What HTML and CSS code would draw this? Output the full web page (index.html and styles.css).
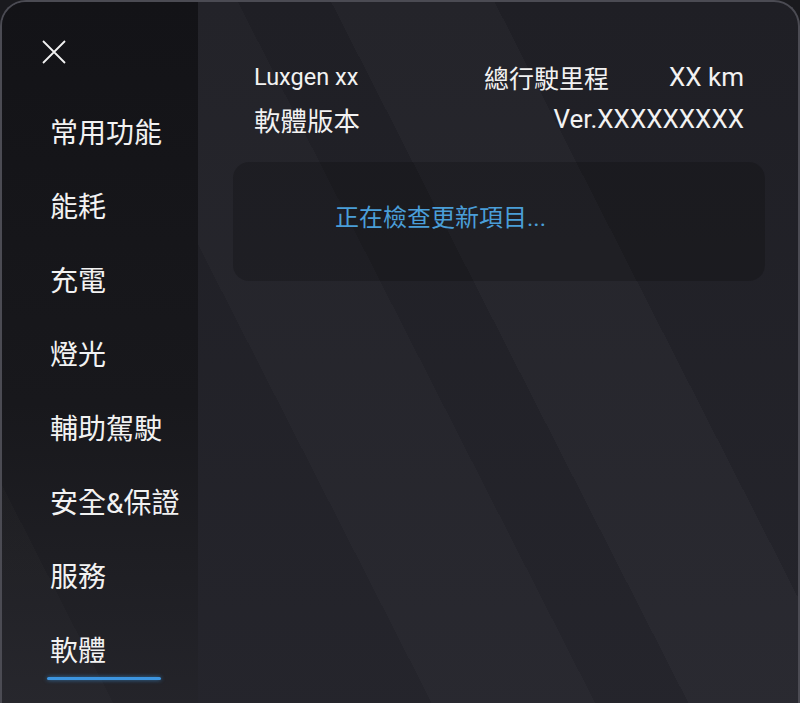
FILE: index.html
```html
<!DOCTYPE html>
<html lang="zh-Hant">
<head>
    <meta charset="UTF-8">
    <meta name="viewport" content="width=device-width, initial-scale=1.0">
    <title>Luxgen - 軟體</title>
    <link rel="stylesheet" href="styles.css">
</head>
<body>
    <div class="panel">
        <aside class="sidebar">
            <button class="close-btn" aria-label="關閉">
                <svg width="24" height="24" viewBox="0 0 24 24">
                    <path d="M1 1 L23 23 M23 1 L1 23" stroke="#f2f2f2" stroke-width="1.8" fill="none"/>
                </svg>
            </button>
            <ul class="nav">
                <li>常用功能</li>
                <li>能耗</li>
                <li>充電</li>
                <li>燈光</li>
                <li>輔助駕駛</li>
                <li>安全&amp;保證</li>
                <li>服務</li>
                <li class="active">軟體</li>
            </ul>
        </aside>

        <main class="content">
            <div class="info-row">
                <span class="model">Luxgen xx</span>
                <div class="info-right">
                    <span class="label mileage">總行駛里程</span>
                    <span class="value">XX km</span>
                </div>
            </div>
            <div class="info-row">
                <span class="label">軟體版本</span>
                <span class="value">Ver.XXXXXXXXX</span>
            </div>

            <div class="update-card">
                <p>正在檢查更新項目...</p>
            </div>
        </main>
    </div>
</body>
</html>
```

FILE: styles.css
```css
* {
    margin: 0;
    padding: 0;
    box-sizing: border-box;
}

body {
    width: 800px;
    height: 703px;
    overflow: hidden;
    background: #1a1a1e;
    font-family: 'Roboto', 'Noto Sans CJK TC', sans-serif;
    color: #f2f2f2;
}

.panel {
    display: flex;
    height: 730px;
    border: 2px solid #4b4b53;
    border-bottom: none;
    border-radius: 26px 26px 0 0;
    overflow: hidden;
    background:
        linear-gradient(63deg,
            transparent 0%, transparent 38%,
            rgba(255, 255, 255, 0.018) 38%, rgba(255, 255, 255, 0.018) 52%,
            transparent 52%, transparent 60%,
            rgba(255, 255, 255, 0.022) 60%, rgba(255, 255, 255, 0.022) 74%,
            transparent 74%),
        linear-gradient(180deg, #1f1f25 0%, #25252c 100%);
}

/* Sidebar */

.sidebar {
    width: 196px;
    flex-shrink: 0;
    padding-top: 38px;
    background:
        linear-gradient(63deg, rgba(255, 255, 255, 0.015) 0%, rgba(255, 255, 255, 0.015) 22%, transparent 22%),
        linear-gradient(180deg, #131317 0%, #18181c 55%, #25252b 100%);
}

.close-btn {
    display: block;
    margin-left: 40px;
    width: 24px;
    height: 24px;
    background: none;
    border: none;
    cursor: pointer;
}

.nav {
    list-style: none;
    margin-top: 33px;
}

.nav li {
    position: relative;
    height: 74px;
    line-height: 74px;
    padding-left: 48px;
    font-size: 28px;
}

.nav li.active::after {
    content: '';
    position: absolute;
    left: 45px;
    bottom: 9px;
    width: 114px;
    height: 3px;
    border-radius: 2px;
    background: #3d95e0;
    box-shadow: 0 0 4px rgba(61, 149, 224, 0.7);
}

/* Main content */

.content {
    flex: 1;
    padding: 54px 54px 0 56px;
}

.info-row {
    display: flex;
    justify-content: space-between;
    align-items: center;
    height: 42px;
}

.info-right {
    display: flex;
    align-items: center;
    gap: 60px;
}

.model {
    font-size: 23.5px;
}

.label {
    font-size: 26.5px;
}

.label.mileage {
    font-size: 25px;
}

.value {
    font-size: 26px;
}

.update-card {
    margin: 22px -21px 0 -21px;
    height: 119px;
    padding: 40px 0 0 102px;
    border-radius: 16px;
    background: rgba(0, 0, 0, 0.18);
}

.update-card p {
    font-size: 24px;
    line-height: 32px;
    color: #4a9ed8;
}
```
